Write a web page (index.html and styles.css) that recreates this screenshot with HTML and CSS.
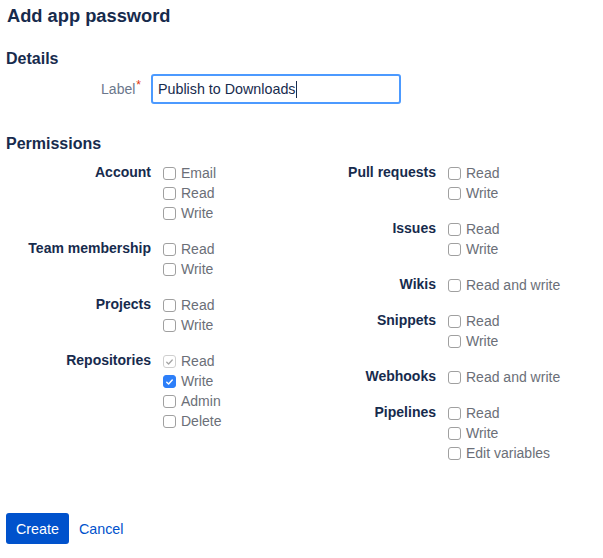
FILE: index.html
```html
<html lang="en">
<head>
  <meta charset="UTF-8">
  <meta name="viewport" content="width=device-width, initial-scale=1.0">
  <title>Add app password</title>
  <link rel="stylesheet" href="styles.css">
</head>
<body>
  <div class="page">
    <h1>Add app password</h1>

    <h2 class="details-title">Details</h2>
    <div class="field-row">
      <label class="field-label">Label<span class="required">*</span></label>
      <div class="text-input">Publish to Downloads<span class="caret"></span></div>
    </div>

    <h2 class="perm-title">Permissions</h2>
    <div class="perm-grid">
      <div class="perm-col">
        <div class="perm-group">
          <div class="group-label">Account</div>
          <div class="options">
            <div class="option"><span class="box"></span>Email</div>
            <div class="option"><span class="box"></span>Read</div>
            <div class="option"><span class="box"></span>Write</div>
          </div>
        </div>
        <div class="perm-group">
          <div class="group-label">Team membership</div>
          <div class="options">
            <div class="option"><span class="box"></span>Read</div>
            <div class="option"><span class="box"></span>Write</div>
          </div>
        </div>
        <div class="perm-group">
          <div class="group-label">Projects</div>
          <div class="options">
            <div class="option"><span class="box"></span>Read</div>
            <div class="option"><span class="box"></span>Write</div>
          </div>
        </div>
        <div class="perm-group">
          <div class="group-label">Repositories</div>
          <div class="options">
            <div class="option"><span class="box implied"><svg viewBox="0 0 12 12" width="12" height="12"><path d="M3 6.2l2 2 4-4.4" fill="none" stroke="#a5a5a5" stroke-width="1.4" stroke-linecap="round" stroke-linejoin="round"/></svg></span>Read</div>
            <div class="option"><span class="box checked"><svg viewBox="0 0 12 12" width="12" height="12"><path d="M3 6.2l2 2 4-4.4" fill="none" stroke="#fff" stroke-width="1.6" stroke-linecap="round" stroke-linejoin="round"/></svg></span>Write</div>
            <div class="option"><span class="box"></span>Admin</div>
            <div class="option"><span class="box"></span>Delete</div>
          </div>
        </div>
      </div>

      <div class="perm-col">
        <div class="perm-group">
          <div class="group-label">Pull requests</div>
          <div class="options">
            <div class="option"><span class="box"></span>Read</div>
            <div class="option"><span class="box"></span>Write</div>
          </div>
        </div>
        <div class="perm-group">
          <div class="group-label">Issues</div>
          <div class="options">
            <div class="option"><span class="box"></span>Read</div>
            <div class="option"><span class="box"></span>Write</div>
          </div>
        </div>
        <div class="perm-group">
          <div class="group-label">Wikis</div>
          <div class="options">
            <div class="option"><span class="box"></span>Read and write</div>
          </div>
        </div>
        <div class="perm-group">
          <div class="group-label">Snippets</div>
          <div class="options">
            <div class="option"><span class="box"></span>Read</div>
            <div class="option"><span class="box"></span>Write</div>
          </div>
        </div>
        <div class="perm-group">
          <div class="group-label">Webhooks</div>
          <div class="options">
            <div class="option"><span class="box"></span>Read and write</div>
          </div>
        </div>
        <div class="perm-group">
          <div class="group-label">Pipelines</div>
          <div class="options">
            <div class="option"><span class="box"></span>Read</div>
            <div class="option"><span class="box"></span>Write</div>
            <div class="option"><span class="box"></span>Edit variables</div>
          </div>
        </div>
      </div>
    </div>

    <div class="actions">
      <button class="btn-primary">Create</button>
      <a class="btn-link" href="#">Cancel</a>
    </div>
  </div>
</body>
</html>
```

FILE: styles.css
```css
body {
  margin: 0;
  padding: 0;
  font-family: "Liberation Sans", Arial, sans-serif;
  font-size: 14px;
  color: #172b4d;
  background-color: #fff;
}

.page {
  padding: 0 6px;
}

h1 {
  margin: 4px 0 0 1px;
  font-size: 18.3px;
  line-height: 24px;
  font-weight: bold;
}

h2 {
  margin: 0;
  font-size: 16px;
  line-height: 20px;
  font-weight: bold;
}

.details-title {
  margin-top: 21px;
}

.field-row {
  display: flex;
  align-items: center;
  margin-top: 5px;
}

.field-label {
  width: 135px;
  padding: 0 10px 4px 0;
  text-align: right;
  color: #6b778c;
}

.required {
  color: #de350b;
  font-size: 12px;
  vertical-align: 5px;
  margin-left: 1px;
}

.text-input {
  box-sizing: border-box;
  width: 250px;
  height: 30px;
  padding: 0 5px;
  border: 2px solid #4c9aff;
  border-radius: 3px;
  display: flex;
  align-items: center;
  color: #172b4d;
  font-size: 14.3px;
}

.caret {
  display: inline-block;
  width: 1px;
  height: 17px;
  background-color: #172b4d;
}

.perm-title {
  margin-top: 30px;
}

.perm-grid {
  display: grid;
  grid-template-columns: 285px 285px;
  margin-top: 9px;
}

.perm-col {
  display: flex;
  flex-direction: column;
  gap: 16px;
}

.perm-group {
  display: flex;
  align-items: flex-start;
}

.group-label {
  width: 145px;
  padding-right: 12px;
  text-align: right;
  font-weight: bold;
  line-height: 18px;
}

.options {
  display: flex;
  flex-direction: column;
}

.option {
  display: flex;
  align-items: center;
  height: 20px;
  color: #6b6f78;
}

.box {
  box-sizing: border-box;
  width: 13px;
  height: 13px;
  margin: 1px 5px 0 0;
  border: 1px solid #a0a0a0;
  border-radius: 3px;
  background-color: #fff;
  display: flex;
  align-items: center;
  justify-content: center;
}

.box svg {
  display: block;
}

.box.checked {
  background-color: #2d7ff9;
  border-color: #2d7ff9;
}

.box.implied {
  border-color: #cfcfcf;
}

.actions {
  display: flex;
  align-items: center;
  gap: 10px;
  margin-top: 50px;
}

.btn-primary {
  height: 31px;
  padding: 0 10px;
  border: none;
  border-radius: 3px;
  background-color: #0052cc;
  color: #fff;
  font-family: inherit;
  font-size: 14.3px;
}

.btn-link {
  color: #0052cc;
  text-decoration: none;
  font-size: 14.3px;
}
```
